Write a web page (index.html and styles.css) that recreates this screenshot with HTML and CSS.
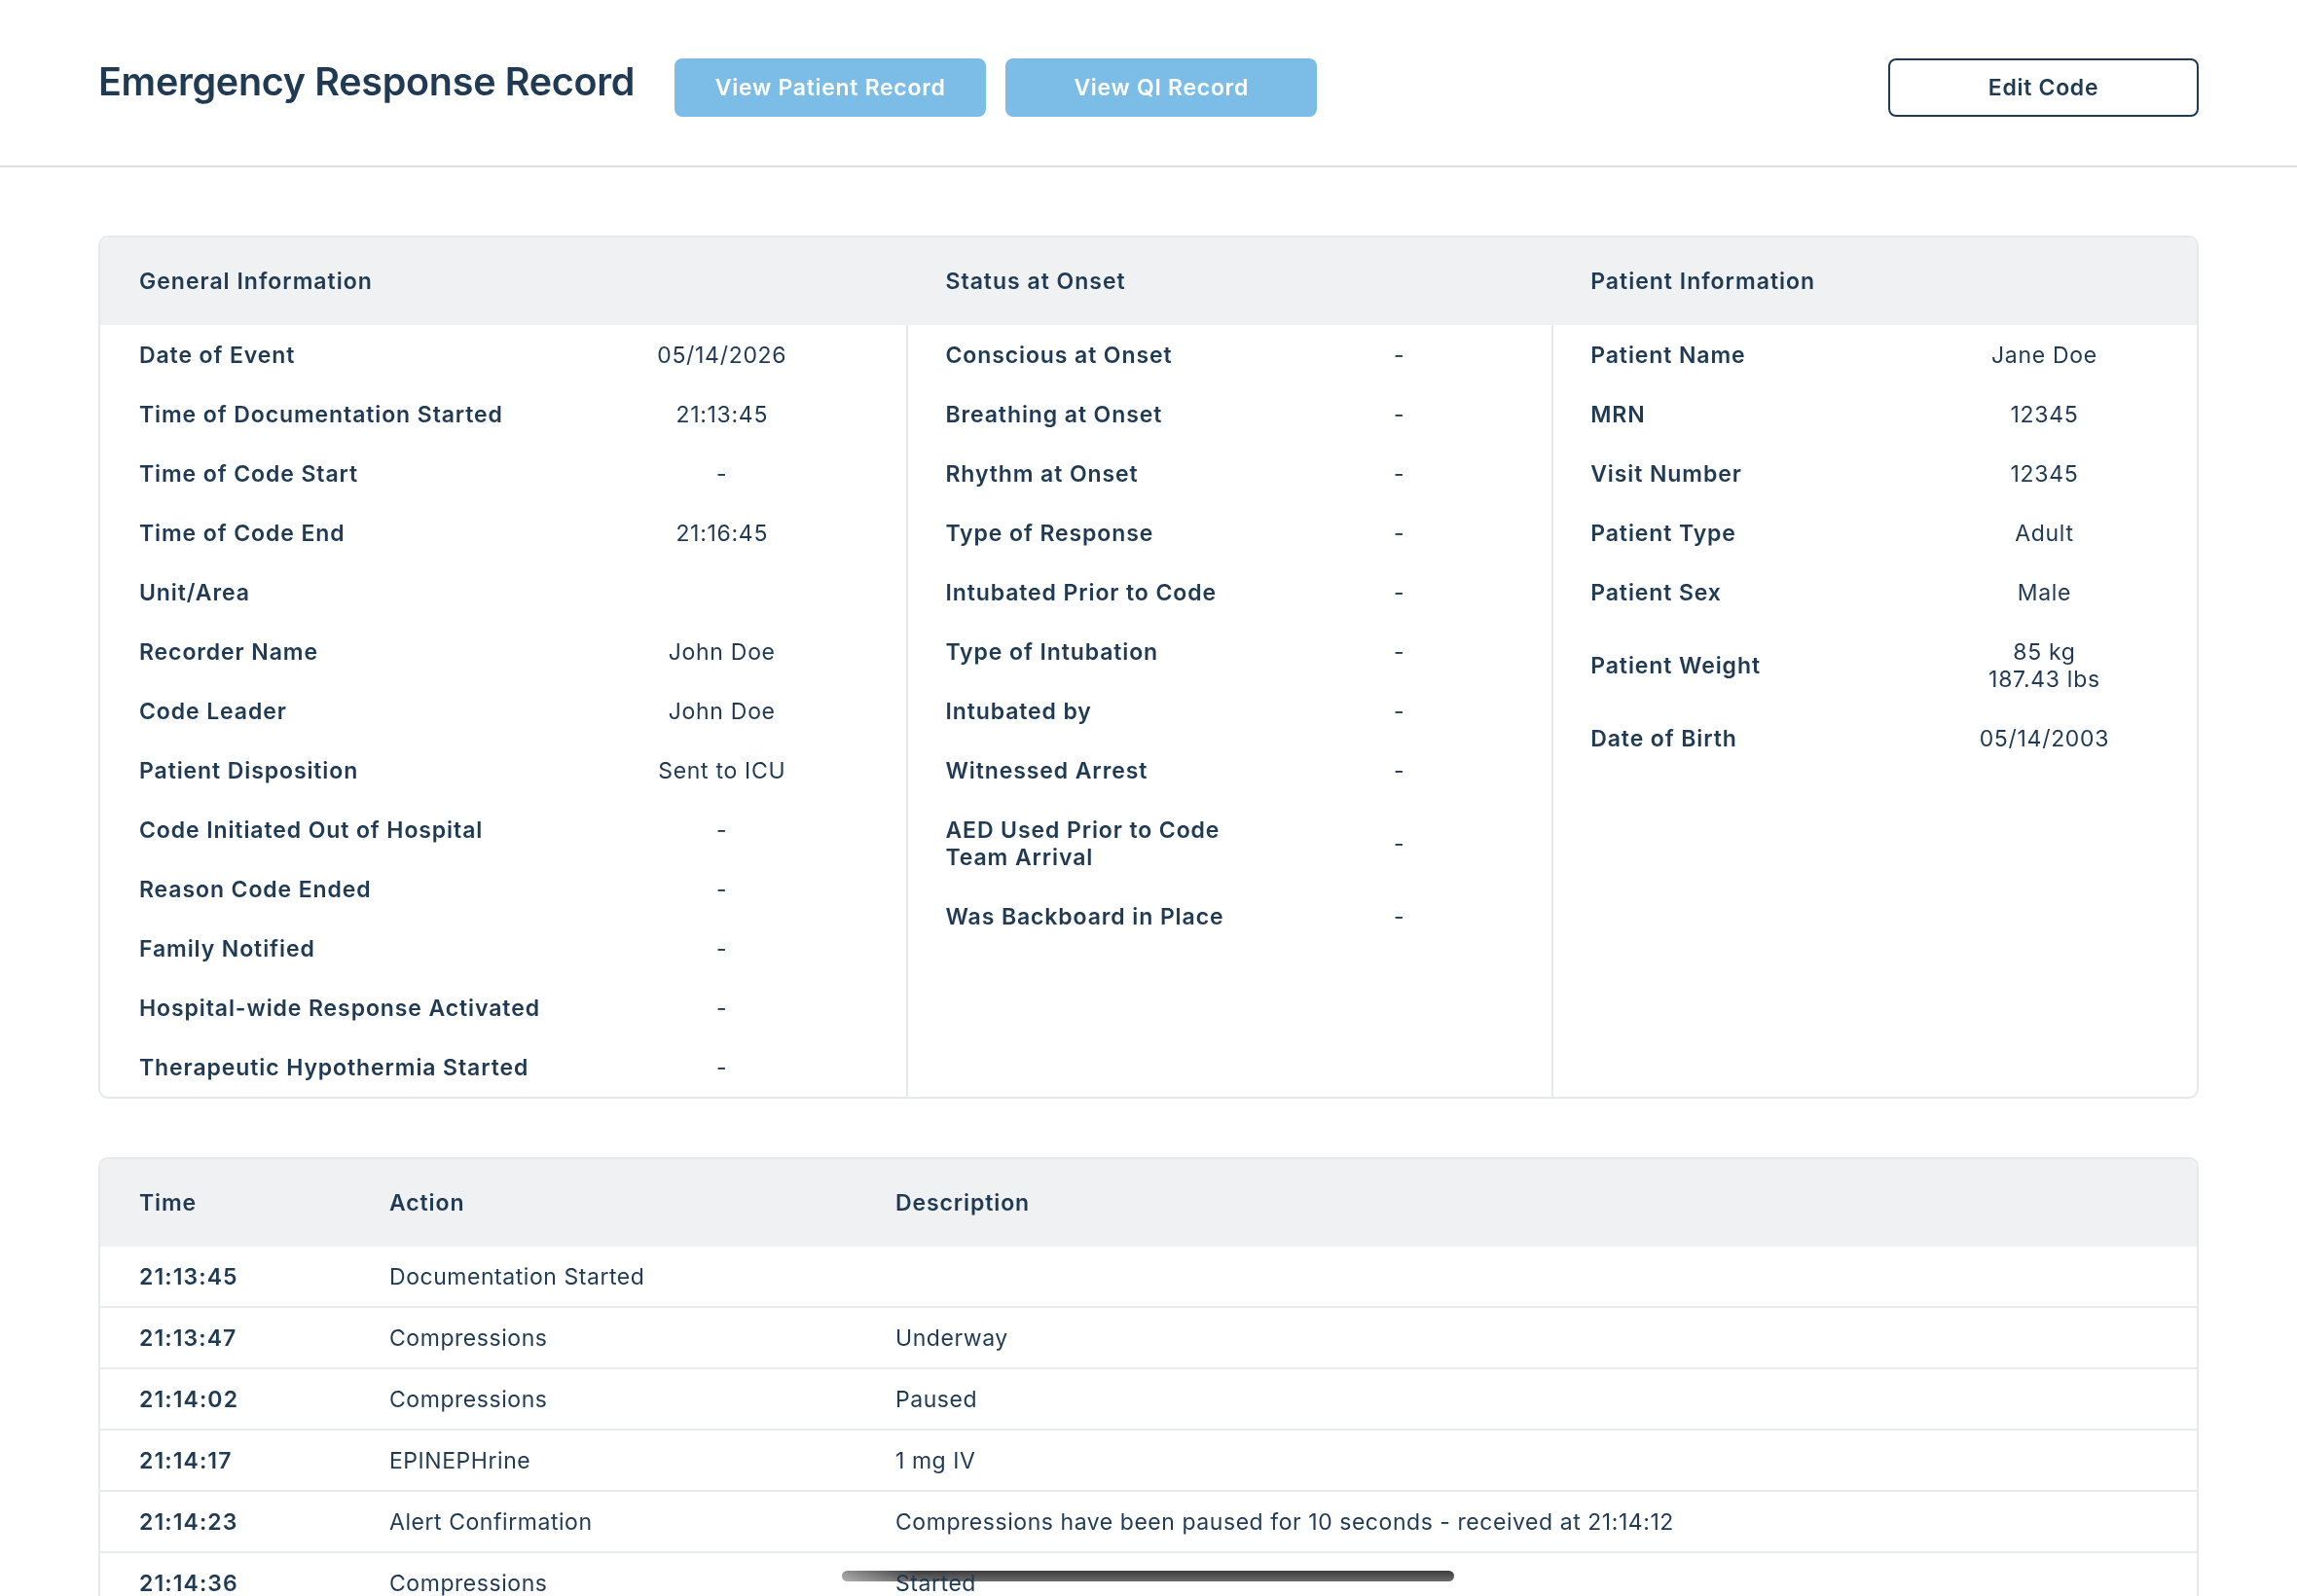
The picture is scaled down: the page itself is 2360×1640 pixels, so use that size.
FILE: index.html
```html
<!DOCTYPE html>
<html lang="en">

<head>
    <meta charset="UTF-8">
    <meta name="viewport" content="width=device-width, initial-scale=1.0">
    <title>Emergency Response Record</title>
    <link rel="stylesheet" href="styles.css">
</head>

<body>
    <header class="topbar">
        <h1 class="title">Emergency Response Record</h1>
        <a href="#" class="btn btn-light">View Patient Record</a>
        <a href="#" class="btn btn-light">View QI Record</a>
        <a href="#" class="btn btn-outline">Edit Code</a>
    </header>

    <main class="content">
        <!-- summary card -->
        <section class="card info">
            <div class="info-head">
                <div class="col-title">General Information</div>
                <div class="col-title">Status at Onset</div>
                <div class="col-title">Patient Information</div>
            </div>
            <div class="info-body">
                <div class="info-col">
                    <div class="row"><span class="label">Date of Event</span><span class="value">05/14/2026</span></div>
                    <div class="row"><span class="label">Time of Documentation Started</span><span class="value">21:13:45</span></div>
                    <div class="row"><span class="label">Time of Code Start</span><span class="value">-</span></div>
                    <div class="row"><span class="label">Time of Code End</span><span class="value">21:16:45</span></div>
                    <div class="row"><span class="label">Unit/Area</span><span class="value"></span></div>
                    <div class="row"><span class="label">Recorder Name</span><span class="value">John Doe</span></div>
                    <div class="row"><span class="label">Code Leader</span><span class="value">John Doe</span></div>
                    <div class="row"><span class="label">Patient Disposition</span><span class="value">Sent to ICU</span></div>
                    <div class="row"><span class="label">Code Initiated Out of Hospital</span><span class="value">-</span></div>
                    <div class="row"><span class="label">Reason Code Ended</span><span class="value">-</span></div>
                    <div class="row"><span class="label">Family Notified</span><span class="value">-</span></div>
                    <div class="row"><span class="label">Hospital-wide Response Activated</span><span class="value">-</span></div>
                    <div class="row"><span class="label">Therapeutic Hypothermia Started</span><span class="value">-</span></div>
                </div>
                <div class="info-col">
                    <div class="row"><span class="label">Conscious at Onset</span><span class="value">-</span></div>
                    <div class="row"><span class="label">Breathing at Onset</span><span class="value">-</span></div>
                    <div class="row"><span class="label">Rhythm at Onset</span><span class="value">-</span></div>
                    <div class="row"><span class="label">Type of Response</span><span class="value">-</span></div>
                    <div class="row"><span class="label">Intubated Prior to Code</span><span class="value">-</span></div>
                    <div class="row"><span class="label">Type of Intubation</span><span class="value">-</span></div>
                    <div class="row"><span class="label">Intubated by</span><span class="value">-</span></div>
                    <div class="row"><span class="label">Witnessed Arrest</span><span class="value">-</span></div>
                    <div class="row"><span class="label">AED Used Prior to Code<br>Team Arrival</span><span class="value">-</span></div>
                    <div class="row"><span class="label">Was Backboard in Place</span><span class="value">-</span></div>
                </div>
                <div class="info-col">
                    <div class="row"><span class="label">Patient Name</span><span class="value">Jane Doe</span></div>
                    <div class="row"><span class="label">MRN</span><span class="value">12345</span></div>
                    <div class="row"><span class="label">Visit Number</span><span class="value">12345</span></div>
                    <div class="row"><span class="label">Patient Type</span><span class="value">Adult</span></div>
                    <div class="row"><span class="label">Patient Sex</span><span class="value">Male</span></div>
                    <div class="row"><span class="label">Patient Weight</span><span class="value">85 kg<br>187.43 lbs</span></div>
                    <div class="row"><span class="label">Date of Birth</span><span class="value">05/14/2003</span></div>
                </div>
            </div>
        </section>

        <!-- event log -->
        <section class="card log">
            <div class="log-row log-head">
                <span>Time</span>
                <span>Action</span>
                <span>Description</span>
            </div>
            <div class="log-row">
                <span class="time">21:13:45</span>
                <span>Documentation Started</span>
                <span></span>
            </div>
            <div class="log-row">
                <span class="time">21:13:47</span>
                <span>Compressions</span>
                <span>Underway</span>
            </div>
            <div class="log-row">
                <span class="time">21:14:02</span>
                <span>Compressions</span>
                <span>Paused</span>
            </div>
            <div class="log-row">
                <span class="time">21:14:17</span>
                <span>EPINEPHrine</span>
                <span>1 mg IV</span>
            </div>
            <div class="log-row">
                <span class="time">21:14:23</span>
                <span>Alert Confirmation</span>
                <span>Compressions have been paused for 10 seconds - received at 21:14:12</span>
            </div>
            <div class="log-row">
                <span class="time">21:14:36</span>
                <span>Compressions</span>
                <span>Started</span>
            </div>
            <div class="log-row">
                <span class="time">21:14:50</span>
                <span>Compressions</span>
                <span>Paused</span>
            </div>
        </section>
    </main>

    <div class="home-bar"></div>
</body>

</html>
```

FILE: styles.css
```css
* {
    padding: 0;
    margin: 0;
    box-sizing: border-box;
}

body {
    font-family: Inter, "Noto Sans", sans-serif;
    font-size: 23px;
    letter-spacing: 0.7px;
    color: #1f3a52;
    background: #fff;
}

.topbar {
    display: flex;
    align-items: center;
    padding: 60px 101px 50px;
    border-bottom: 2px solid #dcdfe3;
}

.title {
    font-size: 39.5px;
    font-weight: 600;
    letter-spacing: -0.3px;
    margin-right: 41px;
    margin-bottom: 12px;
}

.btn {
    display: flex;
    align-items: center;
    justify-content: center;
    width: 320px;
    height: 60px;
    border-radius: 8px;
    font-weight: 600;
    text-decoration: none;
}

.btn-light {
    background: #7bbde6;
    color: #fff;
    margin-right: 20px;
}

.btn-outline {
    margin-left: auto;
    margin-right: 0;
    width: 319px;
    border: 2px solid #1f3a52;
    color: #1f3a52;
}

.content {
    padding: 70px 101px 0;
}

.card {
    border: 2px solid #e6e9ec;
    border-radius: 10px;
    overflow: hidden;
}

.info-head,
.info-body {
    display: grid;
    grid-template-columns: 5fr 4fr 4fr;
}

.info-head {
    background: #eff1f3;
    height: 90px;
    align-items: center;
    font-weight: 600;
    letter-spacing: 1px;
}

.col-title {
    padding-left: 40px;
}

.info-col {
    padding: 0 40px;
}

.info-col + .info-col {
    padding-left: 38px;
    border-left: 2px solid #e6e9ec;
}

.row {
    display: grid;
    grid-template-columns: 60% 40%;
    align-items: center;
    padding: 16.5px 0;
    line-height: 28px;
}

.label {
    font-weight: 600;
    letter-spacing: 0.9px;
}

.value {
    text-align: center;
}

.log {
    margin-top: 60px;
}

.log-row {
    display: grid;
    grid-template-columns: 257px 520px 1fr;
    align-items: center;
    height: 63px;
    padding-left: 40px;
    letter-spacing: 0.55px;
    border-bottom: 2px solid #e9ecef;
}

.log-head {
    height: 90px;
    background: #eff1f3;
    font-weight: 600;
    letter-spacing: 0.9px;
    border-bottom: none;
}

.time {
    font-weight: 600;
    letter-spacing: 1.1px;
}

.home-bar {
    position: fixed;
    left: 865px;
    bottom: 15px;
    width: 629px;
    height: 11px;
    border-radius: 6px;
    background: linear-gradient(90deg, rgba(255, 255, 255, .45), rgba(255, 255, 255, 0) 12%), linear-gradient(#3c3c3c, #6b6b6b);
    z-index: -1;
}
```
